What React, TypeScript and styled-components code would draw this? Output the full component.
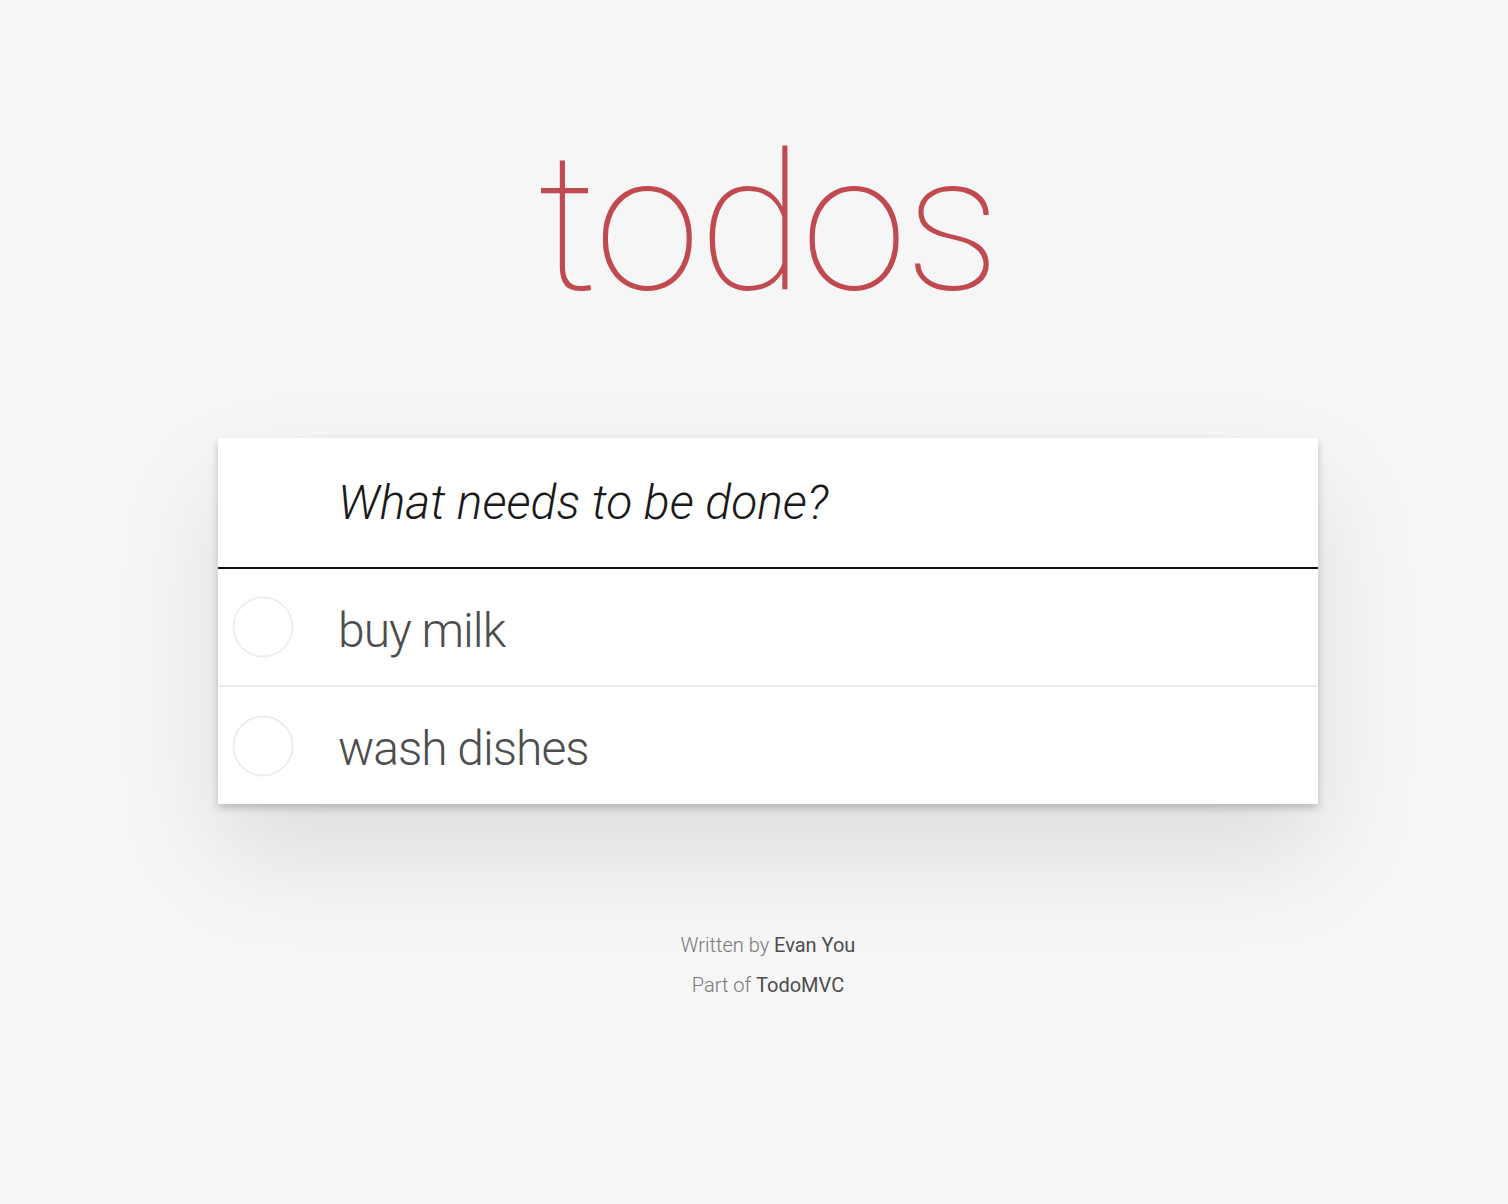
import React from "react";
import styled, { createGlobalStyle } from "styled-components";

const GlobalStyle = createGlobalStyle`
  html, body {
    margin: 0;
    padding: 0;
  }
  body {
    background: #f6f6f6;
    font-family: "Roboto", "Helvetica Neue", "Liberation Sans", Arial, sans-serif;
    font-weight: 300;
    color: #4d4d4d;
    -webkit-font-smoothing: antialiased;
  }
`;

const Page = styled.div`
  min-height: 1204px;
  padding-left: 28px;
  box-sizing: border-box;
  display: flex;
  flex-direction: column;
  align-items: center;
`;

const Title = styled.h1`
  margin: 124px 0 0;
  font-size: 192px;
  line-height: 200px;
  font-weight: 100;
  color: #c04a50;
  text-align: center;
  letter-spacing: -2px;
`;

const Card = styled.section`
  margin-top: 114px;
  width: 1100px;
  background: #fff;
  box-shadow: 0 4px 8px rgba(0, 0, 0, 0.2), 0 50px 100px rgba(0, 0, 0, 0.1);
`;

const NewTodo = styled.div`
  height: 129px;
  display: flex;
  align-items: center;
  padding-left: 120px;
  border-bottom: 2px solid #111;
  font-size: 48px;
  font-style: italic;
  font-weight: 300;
  color: #1a1a1a;
`;

const Item = styled.li<{ $last?: boolean }>`
  height: ${(p) => (p.$last ? 117 : 116)}px;
  display: flex;
  align-items: center;
  border-bottom: ${(p) => (p.$last ? "none" : "2px solid #ededed")};
  font-size: 48px;
  letter-spacing: -1px;
  color: #4d4d4d;
`;

const List = styled.ul`
  margin: 0;
  padding: 0;
  list-style: none;
`;

const Toggle = styled.span`
  width: 120px;
  display: flex;
  justify-content: center;
  padding-right: 30px;
  box-sizing: border-box;
`;

const Label = styled.span`
  padding-top: 6px;
`;

const Info = styled.footer`
  margin-top: 121px;
  font-size: 20px;
  line-height: 40px;
  color: #777;
  text-align: center;
  font-weight: 300;
`;

const Line = styled.p`
  margin: 0;
`;

const Link = styled.span`
  color: #4d4d4d;
  font-weight: 400;
`;

const Circle = () => (
  <svg width="62" height="62" viewBox="0 0 62 62">
    <circle cx="31" cy="31" r="29.5" fill="none" stroke="#ededed" strokeWidth="2" />
  </svg>
);

export default function App() {
  const todos = ["buy milk", "wash dishes"];
  return (
    <>
      <GlobalStyle />
      <Page>
        <Title>todos</Title>
        <Card>
          <NewTodo>What needs to be done?</NewTodo>
          <List>
            {todos.map((t, i) => (
              <Item key={t} $last={i === todos.length - 1}>
                <Toggle>
                  <Circle />
                </Toggle>
                <Label>{t}</Label>
              </Item>
            ))}
          </List>
        </Card>
        <Info>
          <Line>
            Written by <Link>Evan You</Link>
          </Line>
          <Line>
            Part of <Link>TodoMVC</Link>
          </Line>
        </Info>
      </Page>
    </>
  );
}
